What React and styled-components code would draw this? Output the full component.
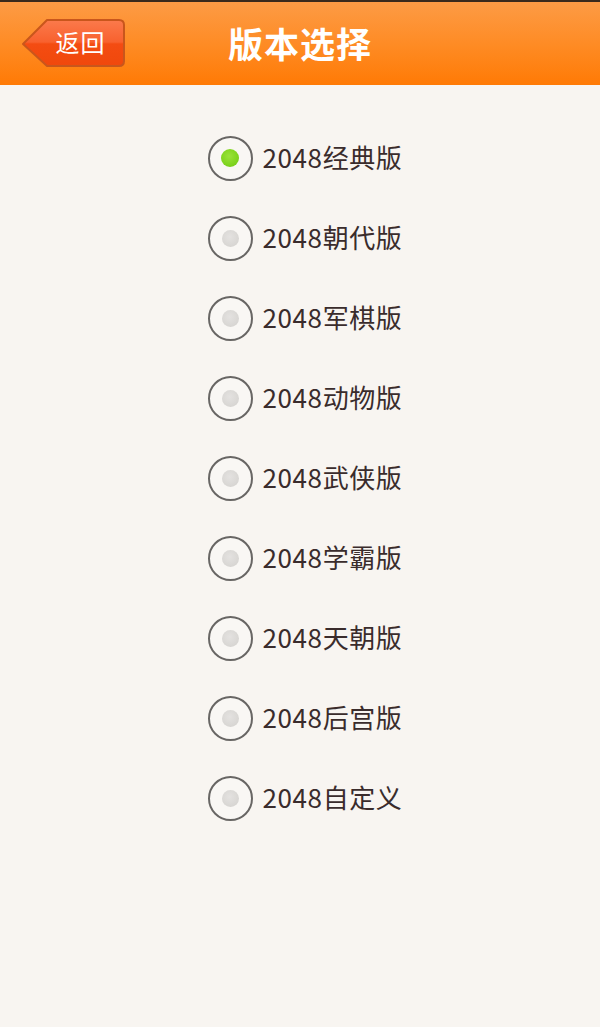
import React, { useState } from 'react';
import styled, { createGlobalStyle } from 'styled-components';

const GlobalStyle = createGlobalStyle`
  html, body {
    margin: 0;
    padding: 0;
    background: #f8f5f1;
  }
  body {
    font-family: "Noto Sans CJK SC", "Noto Sans", sans-serif;
  }
`;

const Page = styled.div`
  width: 600px;
  min-height: 1027px;
  background: #f8f5f1;
`;

const Header = styled.header`
  position: relative;
  height: 83px;
  border-top: 2px solid #3b2a1c;
  background: linear-gradient(to bottom, #fd9b45 0%, #fe8a22 55%, #ff7a05 100%);
  display: flex;
  align-items: center;
  justify-content: center;
`;

const Title = styled.h1`
  margin: 0;
  color: #ffffff;
  font-size: 35px;
  font-weight: 700;
  letter-spacing: 1px;
  line-height: 1;
  margin-top: -3px;
`;

const BackButton = styled.button`
  position: absolute;
  left: 21px;
  top: 16px;
  width: 105px;
  height: 50px;
  padding: 0 0 0 14px;
  border: none;
  background: none;
  display: flex;
  align-items: center;
  justify-content: center;
  cursor: pointer;
`;

const BackShape = styled.svg`
  position: absolute;
  inset: 0;
`;

const BackLabel = styled.span`
  position: relative;
  color: #fff;
  font-family: "Noto Sans CJK SC", sans-serif;
  font-size: 24px;
  line-height: 1;
  letter-spacing: 1px;
  margin-top: -2px;
`;

const List = styled.div`
  display: flex;
  flex-direction: column;
  align-items: center;
  padding: 33px 0 0 10px;
`;

const Row = styled.label`
  height: 80px;
  display: flex;
  align-items: center;
  gap: 10px;
  cursor: pointer;
`;

const Ring = styled.span`
  width: 41px;
  height: 41px;
  border-radius: 50%;
  border: 2.5px solid #686664;
  background: #f9f7f4;
  display: flex;
  align-items: center;
  justify-content: center;
  flex-shrink: 0;
`;

const Dot = styled.span`
  width: ${p => (p.$on ? 18 : 17)}px;
  height: ${p => (p.$on ? 18 : 17)}px;
  border-radius: 50%;
  background: ${p =>
    p.$on
      ? 'radial-gradient(circle at 45% 40%, #9ae23a 0%, #7fd41e 60%, #6cc214 100%)'
      : 'radial-gradient(circle at 45% 40%, #e4e2e0 0%, #d8d6d3 70%, #c9c7c4 100%)'};
`;

const Label = styled.span`
  font-size: 26px;
  color: #3a2c2c;
  line-height: 1;
  letter-spacing: 0.6px;
  margin-top: -3px;
`;

const versions = [
  '2048经典版',
  '2048朝代版',
  '2048军棋版',
  '2048动物版',
  '2048武侠版',
  '2048学霸版',
  '2048天朝版',
  '2048后宫版',
  '2048自定义',
];

export default function App() {
  const [selected, setSelected] = useState(0);

  return (
    <Page>
      <GlobalStyle />
      <Header>
        <BackButton>
          <BackShape width="105" height="50" viewBox="0 0 105 50">
            <defs>
              <linearGradient id="bk" x1="0" y1="0" x2="0" y2="1">
                <stop offset="0" stopColor="#fb7a4c" />
                <stop offset="0.48" stopColor="#f8612e" />
                <stop offset="0.52" stopColor="#f44c12" />
                <stop offset="1" stopColor="#f0480c" />
              </linearGradient>
            </defs>
            <path
              d="M2 26 L26 2 H98 Q103 2 103 7 V43 Q103 48 98 48 H26 Z"
              fill="url(#bk)"
              stroke="#c9561c"
              strokeWidth="2"
              strokeLinejoin="round"
            />
          </BackShape>
          <BackLabel>返回</BackLabel>
        </BackButton>
        <Title>版本选择</Title>
      </Header>
      <List>
        {versions.map((v, i) => (
          <Row key={v} onClick={() => setSelected(i)}>
            <Ring>
              <Dot $on={selected === i} />
            </Ring>
            <Label>{v}</Label>
          </Row>
        ))}
      </List>
    </Page>
  );
}
